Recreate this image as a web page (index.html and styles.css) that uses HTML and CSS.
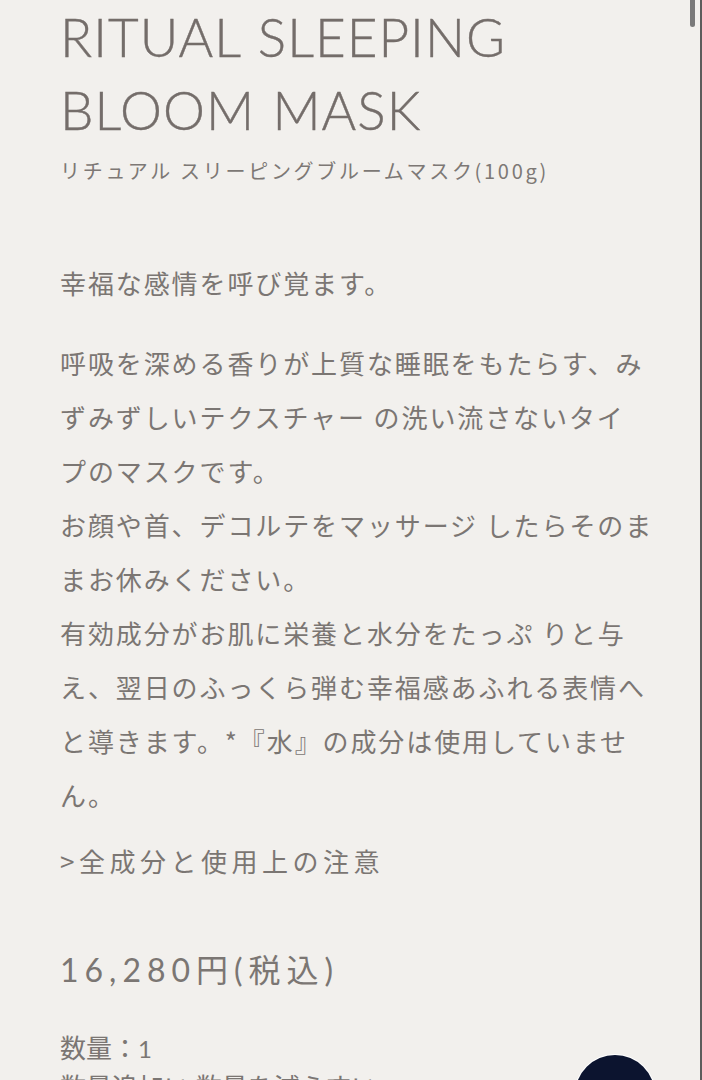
FILE: index.html
```html
<!DOCTYPE html>
<html lang="ja">
<head>
<meta charset="utf-8">
<title>RITUAL SLEEPING BLOOM MASK</title>
<link rel="stylesheet" href="styles.css">
</head>
<body>
<main class="product">
  <h1 class="product-title">RITUAL SLEEPING<br>BLOOM MASK</h1>
  <p class="product-sub">リチュアル スリーピングブルームマスク(100g)</p>

  <div class="product-desc">
    <p class="lead">幸福な感情を呼び覚ます。</p>
    <p class="body">呼吸を深める香りが上質な睡眠をもたらす、み<br>ずみずしいテクスチャー の洗い流さないタイ<br>プのマスクです。<br>お顔や首、デコルテをマッサージ したらそのま<br>まお休みください。<br>有効成分がお肌に栄養と水分をたっぷ りと与<br>え、翌日のふっくら弾む幸福感あふれる表情へ<br>と導きます。*『水』の成分は使用していませ<br>ん。</p>
    <p class="link">&gt;全成分と使用上の注意</p>
  </div>

  <p class="price">16,280円(税込)</p>

  <div class="qty">
    <p class="qty-label">数量：<span class="qty-num">1</span></p>
    <p class="qty-actions">数量追加い 数量を減らすい</p>
  </div>
</main>

<div class="scroll-track"><div class="scroll-thumb"></div></div>
<div class="chat-button"></div>
</body>
</html>
```

FILE: styles.css
```css
html, body {
  margin: 0;
  padding: 0;
  background: #f2f0ed;
  overflow: hidden;
}

body {
  font-family: "Lato", "Noto Sans CJK JP", sans-serif;
  color: #7b7673;
}

p { margin: 0; }

.product {
  padding: 0 60px;
}

.product-title {
  margin: 0;
  font-family: "Lato", sans-serif;
  font-weight: 300;
  font-size: 53px;
  line-height: 73px;
  letter-spacing: 1px;
  word-spacing: 2px;
  color: #746d6a;
  -webkit-text-stroke: 0.4px #746d6a;
}

.product-sub {
  margin-top: 10px;
  font-family: "Noto Sans CJK JP", sans-serif;
  font-size: 20px;
  line-height: 30px;
  letter-spacing: 2.7px;
  color: #7d7875;
}

.product-desc {
  margin-top: 70px;
  font-family: "Noto Sans CJK JP", sans-serif;
  font-size: 26px;
  line-height: 54px;
  letter-spacing: 1.9px;
  white-space: nowrap;
}

.lead { margin-bottom: 26px; }

.link {
  margin-top: 12px;
  letter-spacing: 4.5px;
}

.price {
  margin-top: 62px;
  font-size: 32px;
  line-height: 40px;
  letter-spacing: 6px;
}

.qty {
  margin-top: 39px;
  font-family: "Noto Sans CJK JP", sans-serif;
  font-size: 26px;
}

.qty-label {
  line-height: 36px;
}

.qty-num {
  font-family: "Lato", sans-serif;
  font-weight: 400;
  font-size: 24px;
}

.qty-actions {
  line-height: 37px;
}

.scroll-track {
  position: fixed;
  top: 0;
  right: 0;
  width: 12px;
  height: 100%;
  border-right: 2px solid #5c5c5c;
  box-sizing: border-box;
}

.scroll-thumb {
  position: absolute;
  top: 0;
  right: 5px;
  width: 5px;
  height: 27px;
  border-radius: 0 0 3px 3px;
  background: #7a7a7a;
}

.chat-button {
  position: fixed;
  left: 575px;
  top: 1055px;
  width: 80px;
  height: 80px;
  border-radius: 50%;
  background: #0c142f;
  box-shadow: 0 0 0 1px #ffffff;
}
```
